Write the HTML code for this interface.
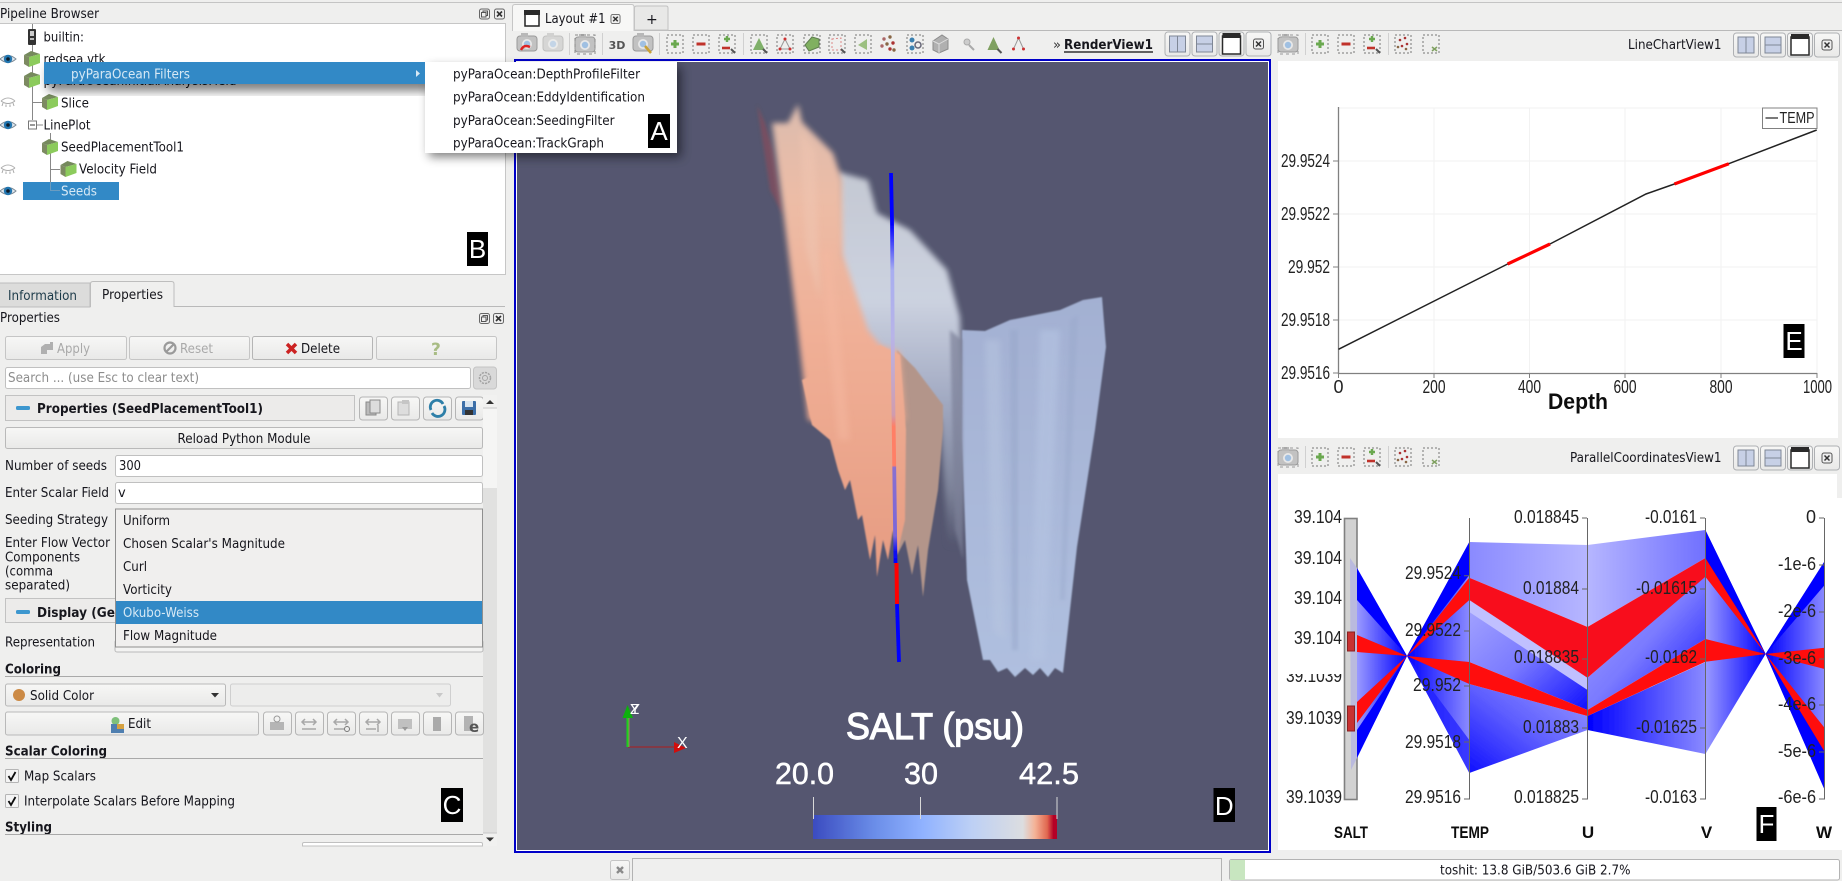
<!DOCTYPE html>
<html><head><meta charset="utf-8"><style>
html,body{margin:0;padding:0;background:#efefee;width:1842px;height:881px;overflow:hidden}
svg{display:block}
text{font-family:"DejaVu Sans","Liberation Sans",sans-serif;font-size:13px;fill:#15151c}
.b{font-weight:bold}
.v{font-family:"Liberation Sans",sans-serif;font-size:18px;fill:#222}
.vb{font-family:"Liberation Sans",sans-serif;font-weight:bold;fill:#111}
.lab{font-family:"Liberation Sans",sans-serif;font-size:32px;fill:#000}
.dis{fill:#a9a9a9}
</style></head><body>
<svg xmlns="http://www.w3.org/2000/svg" width="1842" height="881" viewBox="0 0 1842 881">
<defs>
<filter id="soft" x="-2%" y="-2%" width="104%" height="104%"><feGaussianBlur stdDeviation="0.35"/></filter>
<filter id="b05" x="-20%" y="-20%" width="140%" height="140%"><feGaussianBlur stdDeviation="0.8"/></filter>
<filter id="b1" x="-20%" y="-20%" width="140%" height="140%"><feGaussianBlur stdDeviation="1.6"/></filter>
<filter id="b3" x="-20%" y="-20%" width="140%" height="140%"><feGaussianBlur stdDeviation="3"/></filter>
<filter id="b5" x="-20%" y="-20%" width="140%" height="140%"><feGaussianBlur stdDeviation="5"/></filter>
<linearGradient id="btn" x1="0" y1="0" x2="0" y2="1"><stop offset="0" stop-color="#f7f7f6"/><stop offset="1" stop-color="#e9e9e8"/></linearGradient>
<linearGradient id="cbar"><stop offset="0" stop-color="#3b4cc0"/><stop offset=".25" stop-color="#6a8de8"/><stop offset=".45" stop-color="#90b2ff"/><stop offset=".65" stop-color="#bdd0f5"/><stop offset=".86" stop-color="#dcdde0"/><stop offset=".91" stop-color="#f4b296"/><stop offset=".96" stop-color="#e0674f"/><stop offset=".985" stop-color="#b40426"/><stop offset="1" stop-color="#b40426"/></linearGradient>
<linearGradient id="or" gradientUnits="userSpaceOnUse" x1="0" y1="105" x2="0" y2="570"><stop offset="0" stop-color="#dcbcae"/><stop offset=".2" stop-color="#ecbca6"/><stop offset=".5" stop-color="#f0af96"/><stop offset="1" stop-color="#e69c82"/></linearGradient>
<linearGradient id="gy" gradientUnits="userSpaceOnUse" x1="0" y1="168" x2="0" y2="545"><stop offset="0" stop-color="#c4c8d2"/><stop offset=".35" stop-color="#ccd2e0"/><stop offset=".6" stop-color="#a4acc4"/><stop offset=".85" stop-color="#7d8399"/><stop offset="1" stop-color="#54566f"/></linearGradient>
<linearGradient id="bl" x1="0" y1="0" x2="0" y2="1"><stop offset="0" stop-color="#a3b0d2"/><stop offset="1" stop-color="#afbfdf"/></linearGradient>
<linearGradient id="seg" x1="0" y1="173" x2="0" y2="563" gradientUnits="userSpaceOnUse"><stop offset="0" stop-color="#0000ff"/><stop offset=".13" stop-color="#0000ff"/><stop offset=".25" stop-color="#a8aef0"/><stop offset=".42" stop-color="#b8b4e8"/><stop offset=".62" stop-color="#d09cae"/><stop offset=".65" stop-color="#ff7f66"/><stop offset=".75" stop-color="#ff7f66"/><stop offset=".755" stop-color="#8a70d0"/><stop offset=".93" stop-color="#7a66d8"/><stop offset=".97" stop-color="#1010f0"/><stop offset="1" stop-color="#0000ff"/></linearGradient>
<linearGradient id="g_lr" x1="0" x2="1" y1="0" y2="0"><stop offset="0" stop-color="#8a8aff"/><stop offset="1" stop-color="#b6b6ff"/></linearGradient>
<linearGradient id="g_rl" x1="0" x2="1" y1="0" y2="0"><stop offset="0" stop-color="#b6b6ff"/><stop offset="1" stop-color="#7070ff"/></linearGradient>
<linearGradient id="g_toblue" x1="0" x2="1" y1="0" y2="0"><stop offset="0" stop-color="#9a9aff"/><stop offset="1" stop-color="#0000ff"/></linearGradient>
<linearGradient id="g_fromblue" x1="0" x2="1" y1="0" y2="0"><stop offset="0" stop-color="#0000ff"/><stop offset="1" stop-color="#8a8aff"/></linearGradient>
<linearGradient id="g_mid1" x1="0" x2="1" y1="0" y2="1"><stop offset="0" stop-color="#a5a5ff"/><stop offset=".5" stop-color="#7a7aff"/><stop offset="1" stop-color="#1010ff"/></linearGradient>
<linearGradient id="g_mid2" x1="0" x2="1" y1="1" y2="0"><stop offset="0" stop-color="#1010ff"/><stop offset=".5" stop-color="#6060ff"/><stop offset="1" stop-color="#9a9aff"/></linearGradient>
<symbol id="dock" viewBox="0 0 11 11" overflow="visible"><rect x=".5" y=".5" width="10" height="10" rx="2" fill="#eee" stroke="#666"/><rect x="4" y="2.5" width="4.5" height="4.5" fill="none" stroke="#555"/><rect x="2.5" y="4" width="4.5" height="4.5" fill="#eee" stroke="#555"/></symbol>
<symbol id="xb" viewBox="0 0 11 11" overflow="visible"><rect x=".5" y=".5" width="10" height="10" rx="2" fill="#eee" stroke="#666"/><path d="M3 3L8 8M8 3L3 8" stroke="#333" stroke-width="1.6"/></symbol>
<g id="cube"><path d="M-8 -4L-3 -2L-3 8L-8 5Z" fill="#7d8a62"/><path d="M-8 -4L-1 -8L8 -5L-3 -2Z" fill="#74895c"/><path d="M-3 -2L8 -5L8 4L-3 8Z" fill="#8ccb5c"/></g>
<g id="eye"><path d="M-8 0Q0 -7 8 0Q0 7 -8 0Z" fill="#dfe6ec" stroke="#7b8a96"/><circle r="4.200" fill="#2476b0"/><circle r="1.800" fill="#0a1a2a"/></g>
<g id="eyec"><path d="M-7 -1Q0 -7 7 -1" fill="none" stroke="#b5b5b5"/><path d="M-7 -1Q0 4 7 -1M-5 1L-6 4M-2 2.500L-2 5M2 2.500L2 5M5 1L6 4" fill="none" stroke="#aaa"/></g>
<g id="cam"><rect x="-10" y="-7" width="20" height="15" rx="3" fill="#c2c2c2" stroke="#999"/><rect x="-6" y="-10" width="7" height="4" fill="#b8b8b8"/><circle cy="1" r="5" fill="#e8e8e8"/><circle cy="1" r="3.200" fill="#a0c0e2"/></g>
<g id="dashb"><rect x="-8" y="-9" width="16" height="18" fill="none" stroke="#777" stroke-dasharray="2 2"/></g>
<g id="plus"><use href="#dashb"/><path d="M-4 0H4M0 -4V4" stroke="#6aa84f" stroke-width="3"/></g>
<g id="minus"><use href="#dashb"/><path d="M-4.500 0H4.500" stroke="#c0302c" stroke-width="3"/></g>
<g id="plusminus"><use href="#dashb"/><path d="M-3 -5H3M0 -8V-2" stroke="#6aa84f" stroke-width="2.400"/><path d="M-5 4H3" stroke="#c0302c" stroke-width="2.600"/><path d="M4 5L8 9" stroke="#555" stroke-width="2"/></g>
<g id="mark"><use href="#dashb"/><circle cx="-3" cy="-4" r="1.300" fill="#a33"/><circle cx="2" cy="-6" r="1.300" fill="#a33"/><circle cx="4" cy="0" r="1.300" fill="#a33"/><circle cx="-1" cy="2" r="1.300" fill="#a33"/><circle cx="-5" cy="3" r="1.300" fill="#864"/><circle cx="3" cy="5" r="1.300" fill="#864"/></g>
<g id="vsplit"><rect x="-12.500" y="-12" width="25" height="24" rx="3" fill="url(#btn)" stroke="#aeb0b3"/><rect x="-8" y="-8" width="16" height="16" fill="#c7d0e6" stroke="#7f8796"/><path d="M0 -8V8" stroke="#7f8796"/></g>
<g id="hsplit"><rect x="-12.500" y="-12" width="25" height="24" rx="3" fill="url(#btn)" stroke="#aeb0b3"/><rect x="-8" y="-8" width="16" height="16" fill="#c7d0e6" stroke="#7f8796"/><path d="M-8 0H8" stroke="#7f8796"/></g>
<g id="maxi"><rect x="-12.500" y="-12" width="25" height="24" rx="3" fill="url(#btn)" stroke="#aeb0b3"/><rect x="-9" y="-8" width="18" height="18" fill="#fff" stroke="#2c2c2c" stroke-width="1.500"/><rect x="-9" y="-11" width="18" height="5" fill="#2c2c2c"/></g>
<g id="closeb"><rect x="-12.500" y="-12" width="25" height="24" rx="3" fill="url(#btn)" stroke="#aeb0b3"/><rect x="-5" y="-5" width="10" height="10" rx="2" fill="#eee" stroke="#555"/><path d="M-2.500 -2.500L2.500 2.500M2.500 -2.500L-2.500 2.500" stroke="#333" stroke-width="1.500"/></g>
<g id="sb"><rect x="0" y="0" width="28" height="23" rx="3" fill="url(#btn)" stroke="#b5b5b5"/></g>
</defs>

<rect width="1842" height="881" fill="#efefee"/>
<g filter="url(#soft)">
<rect x="0" y="2" width="1842" height="1" fill="#c4c4c4"/>

<!-- ===== pipeline browser ===== -->
<text x="0" y="18" textLength="99" lengthAdjust="spacingAndGlyphs">Pipeline Browser</text>
<use href="#dock" x="479" y="8.500" width="11" height="11"/>
<use href="#xb" x="494" y="8.500" width="11" height="11"/>
<rect x="-1" y="23.500" width="506.500" height="251" fill="#fff" stroke="#c6c6c6"/>
<path d="M32.500 24V120M32.500 102.500H43M37 125H43M50.500 133V190.500M50.500 169.500H60M50.500 190.500H60" stroke="#888" fill="none"/>
<rect x="28" y="29" width="8" height="16" rx="1" fill="#333"/><rect x="30" y="31" width="4" height="5" fill="#ccc"/><rect x="30" y="38" width="4" height="2" fill="#bbb"/>
<text x="43.500" y="41.500" textLength="40.500" lengthAdjust="spacingAndGlyphs">builtin:</text>
<use href="#eye" x="8" y="59"/><use href="#cube" x="32" y="59"/>
<text x="43.500" y="63.500" textLength="62" lengthAdjust="spacingAndGlyphs">redsea.vtk</text>
<use href="#cube" x="32" y="80"/>
<text x="43.500" y="85" textLength="193" lengthAdjust="spacingAndGlyphs">pyParaOceanInitialAnalysisField</text>
<use href="#eyec" x="8" y="102"/><use href="#cube" x="50" y="102"/>
<text x="61" y="107.500" textLength="28" lengthAdjust="spacingAndGlyphs">Slice</text>
<use href="#eye" x="8" y="125"/>
<rect x="28.500" y="121" width="8" height="8" fill="#fff" stroke="#777"/><path d="M30 125H35" stroke="#333"/>
<text x="43.500" y="129.500" textLength="47" lengthAdjust="spacingAndGlyphs">LinePlot</text>
<use href="#cube" x="50" y="147"/>
<text x="61" y="151.500" textLength="123" lengthAdjust="spacingAndGlyphs">SeedPlacementTool1</text>
<use href="#eyec" x="8" y="169"/><use href="#cube" x="68.500" y="169"/>
<text x="79" y="173.500" textLength="78" lengthAdjust="spacingAndGlyphs">Velocity Field</text>
<use href="#eye" x="8" y="191"/>
<rect x="23" y="182" width="96" height="18" fill="#3289c6"/>
<path d="M50.500 182V190.500H60" stroke="#6a9cc0" fill="none"/>
<text x="61" y="195.500" textLength="36" lengthAdjust="spacingAndGlyphs" style="fill:#d7e9f5">Seeds</text>

<!-- tabs left -->
<rect x="-1" y="283" width="91" height="24" fill="#dcdcdb" stroke="#bdbdbd"/>
<text x="8" y="300" textLength="69" lengthAdjust="spacingAndGlyphs" style="fill:#1e3a4a">Information</text>
<path d="M90.500 307V284Q90.500 281.500 93 281.500H171.500Q174 281.500 174 284V307" fill="#efefee" stroke="#bdbdbd"/>
<path d="M174 306.500H505" stroke="#b9b9b9"/>
<text x="102" y="299" textLength="61" lengthAdjust="spacingAndGlyphs">Properties</text>
<text x="0" y="322" textLength="60" lengthAdjust="spacingAndGlyphs">Properties</text>
<use href="#dock" x="479" y="313" width="11" height="11"/>
<use href="#xb" x="493" y="313" width="11" height="11"/>

<!-- action buttons -->
<rect x="5.500" y="336.500" width="121" height="23" rx="2" fill="url(#btn)" stroke="#c5c5c5"/>
<path d="M41 354V347L45 344H50V342H53V350H47V354Z" fill="#b0b0b0"/>
<text x="57" y="353" textLength="33" lengthAdjust="spacingAndGlyphs" class="dis">Apply</text>
<rect x="129.500" y="336.500" width="120" height="23" rx="2" fill="url(#btn)" stroke="#c5c5c5"/>
<circle cx="170" cy="348" r="5.500" fill="none" stroke="#9a9a9a" stroke-width="2.200"/><path d="M166 352L174 344" stroke="#9a9a9a" stroke-width="2.200"/>
<text x="180" y="353" textLength="33" lengthAdjust="spacingAndGlyphs" class="dis">Reset</text>
<rect x="252.500" y="336.500" width="120" height="23" rx="2" fill="url(#btn)" stroke="#b5b5b5"/>
<path d="M287 344L296 353M296 344L287 353" stroke="#cc2222" stroke-width="3.500"/>
<text x="301" y="353" textLength="39" lengthAdjust="spacingAndGlyphs">Delete</text>
<rect x="376.500" y="336.500" width="120" height="23" rx="2" fill="url(#btn)" stroke="#c5c5c5"/>
<text x="431" y="355" style="font-size:17px;font-weight:bold;fill:#a8bc84">?</text>

<rect x="5.500" y="367.500" width="465" height="21" rx="2" fill="#fff" stroke="#c0c0c0"/>
<text x="8" y="382" textLength="191" lengthAdjust="spacingAndGlyphs" style="fill:#8d8d8d">Search ... (use Esc to clear text)</text>
<rect x="473.500" y="367" width="23" height="22" rx="3" fill="#d9d9d9" stroke="#c4c4c4"/>
<circle cx="485" cy="378" r="5.500" fill="none" stroke="#a4a4a4" stroke-width="1.500" stroke-dasharray="2.200 1"/><circle cx="485" cy="378" r="2.500" fill="none" stroke="#a4a4a4"/>

<!-- properties header -->
<rect x="5.500" y="395.500" width="349" height="25" fill="#ecebea" stroke="#c2c2c2"/>
<rect x="16" y="406" width="14" height="4" rx="1.500" fill="#3d97cf"/>
<text x="37" y="413" class="b" textLength="226" lengthAdjust="spacingAndGlyphs">Properties (SeedPlacementTool1)</text>
<use href="#sb" x="359.500" y="397"/><rect x="366" y="402" width="10" height="13" fill="#bbb" stroke="#8a8a8a"/><rect x="370" y="400" width="10" height="13" fill="#ddd" stroke="#8a8a8a"/>
<use href="#sb" x="391.500" y="397"/><rect x="398" y="402" width="11" height="13" fill="#ddd" stroke="#b5b5b5"/><rect x="402" y="400" width="7" height="4" fill="#c5c5c5"/>
<use href="#sb" x="423.500" y="397"/><path d="M431 410A6.500 6.500 0 0 1 443 404" fill="none" stroke="#2d7fa8" stroke-width="2.800"/><path d="M444 406A6.500 6.500 0 0 1 432 413" fill="none" stroke="#2d7fa8" stroke-width="2.800"/>
<use href="#sb" x="455.500" y="397"/><rect x="462" y="401" width="14" height="14" rx="1" fill="#3a6ea8"/><rect x="465" y="401" width="8" height="6" fill="#d8e4ef"/><rect x="465" y="410" width="8" height="5" fill="#333"/>
<!-- scrollbar -->
<rect x="483" y="395" width="14" height="451" fill="#f1f1f0"/>
<rect x="483" y="488" width="14" height="345" fill="#e1e1e0"/>
<rect x="483" y="408" width="14" height="80" fill="#f5f5f4"/>
<path d="M486 404L490 400L494 404Z" fill="#333"/><path d="M486 837.500L490 841.500L494 837.500Z" fill="#333"/>
<path d="M483 408H497M483 833H497" stroke="#c8c8c8"/>

<rect x="5.500" y="427.500" width="477" height="21" rx="2" fill="url(#btn)" stroke="#b9b9b9"/>
<text x="177.500" y="443" textLength="133" lengthAdjust="spacingAndGlyphs">Reload Python Module</text>
<text x="5" y="470" textLength="102" lengthAdjust="spacingAndGlyphs">Number of seeds</text>
<rect x="115.500" y="455.500" width="367" height="21" rx="2" fill="#fff" stroke="#c0c0c0"/>
<text x="119" y="470" textLength="22" lengthAdjust="spacingAndGlyphs">300</text>
<text x="5" y="497" textLength="104" lengthAdjust="spacingAndGlyphs">Enter Scalar Field</text>
<rect x="115.500" y="482.500" width="367" height="21" rx="2" fill="#fff" stroke="#c0c0c0"/>
<text x="118" y="497">v</text>
<text x="5" y="524" textLength="103" lengthAdjust="spacingAndGlyphs">Seeding Strategy</text>
<text x="5" y="547" textLength="105" lengthAdjust="spacingAndGlyphs">Enter Flow Vector</text>
<text x="5" y="561.500" textLength="75" lengthAdjust="spacingAndGlyphs">Components</text>
<text x="5" y="575.500" textLength="48" lengthAdjust="spacingAndGlyphs">(comma</text>
<text x="5" y="589.500" textLength="65" lengthAdjust="spacingAndGlyphs">separated)</text>
<rect x="5.500" y="598.500" width="115" height="24" fill="#ecebea" stroke="#c2c2c2"/>
<rect x="16" y="610" width="14" height="4" rx="1.500" fill="#3d97cf"/>
<text x="37" y="617" class="b" textLength="78" lengthAdjust="spacingAndGlyphs">Display (Ge</text>
<text x="5" y="646.500" textLength="90" lengthAdjust="spacingAndGlyphs">Representation</text>

<rect x="115" y="640" width="368" height="12" rx="2" fill="#f3f3f2" stroke="#b9b9b9"/>
<!-- dropdown -->
<rect x="115.500" y="509" width="367" height="138" fill="#f0efee" stroke="#8f8f8f"/>
<text x="123" y="525" textLength="47" lengthAdjust="spacingAndGlyphs">Uniform</text>
<text x="123" y="548" textLength="162" lengthAdjust="spacingAndGlyphs">Chosen Scalar's Magnitude</text>
<text x="123" y="571" textLength="24" lengthAdjust="spacingAndGlyphs">Curl</text>
<text x="123" y="594" textLength="49" lengthAdjust="spacingAndGlyphs">Vorticity</text>
<rect x="116" y="601" width="366" height="23" fill="#3289c6"/>
<text x="123" y="617" textLength="76" lengthAdjust="spacingAndGlyphs" style="fill:#d7e9f5">Okubo-Weiss</text>
<text x="123" y="640" textLength="94" lengthAdjust="spacingAndGlyphs">Flow Magnitude</text>

<text x="5" y="673.500" class="b" textLength="56" lengthAdjust="spacingAndGlyphs">Coloring</text>
<path d="M5 676.500H483" stroke="#a9a9a9"/>
<rect x="5.500" y="684" width="220" height="22" rx="2" fill="url(#btn)" stroke="#b9b9b9"/>
<circle cx="19" cy="695" r="6" fill="#cc8a45"/>
<text x="30" y="700" textLength="64" lengthAdjust="spacingAndGlyphs">Solid Color</text>
<path d="M211 693H219L215 697.500Z" fill="#333"/>
<rect x="230.500" y="684" width="220" height="22" rx="2" fill="#ededec" stroke="#cfcfcf"/>
<path d="M436 693H443L439.500 697.500Z" fill="#c8c8c8"/>
<rect x="5.500" y="712" width="253" height="23" rx="2" fill="url(#btn)" stroke="#b9b9b9"/>
<circle cx="115.500" cy="721" r="4" fill="#7ec07a"/><rect x="111" y="724" width="13" height="9" fill="#4f7fb0"/><rect x="117" y="724" width="7" height="5" fill="#d6a13f"/>
<text x="128" y="728" textLength="23" lengthAdjust="spacingAndGlyphs">Edit</text>
<g>
<use href="#sb" x="263.500" y="712"/><use href="#sb" x="295.500" y="712"/><use href="#sb" x="327.500" y="712"/><use href="#sb" x="359.500" y="712"/><use href="#sb" x="391.500" y="712"/><use href="#sb" x="423.500" y="712"/><use href="#sb" x="455.500" y="712"/>
<rect x="270" y="722" width="14" height="8" fill="#b5b5b5"/><circle cx="277" cy="719" r="3" fill="none" stroke="#999"/>
<path d="M302 722H316M302 729H316M305 719L302 722L305 725M313 719L316 722L313 725" fill="none" stroke="#a8a8a8" stroke-width="1.500"/>
<path d="M334 722H348M334 729H344M337 719L334 722L337 725M345 719L348 722L345 725" fill="none" stroke="#a8a8a8" stroke-width="1.500"/><circle cx="347" cy="729" r="2.500" fill="none" stroke="#777"/>
<path d="M366 722H380M366 729H376M369 719L366 722L369 725M377 719L380 722L377 725M378 725V732" fill="none" stroke="#a8a8a8" stroke-width="1.500"/>
<rect x="398" y="719" width="14" height="10" fill="#c0c0c0"/><path d="M402 727L405 731L408 727Z" fill="#999"/>
<rect x="433" y="717" width="8" height="14" fill="#aaa"/>
<rect x="464" y="716" width="9" height="15" fill="#b3b3b3"/><text x="469" y="732" style="font-size:15px;font-weight:bold;fill:#555">e</text>
</g>
<text x="5" y="755.500" class="b" textLength="102" lengthAdjust="spacingAndGlyphs">Scalar Coloring</text>
<path d="M5 758.500H483" stroke="#a9a9a9"/>
<rect x="5.500" y="769.500" width="13" height="13" rx="1" fill="#f4f4f4" stroke="#b5b5b5"/>
<path d="M8.500 776L11 780L15.500 772" fill="none" stroke="#111" stroke-width="1.800"/>
<text x="24" y="780.500" textLength="72" lengthAdjust="spacingAndGlyphs">Map Scalars</text>
<rect x="5.500" y="794.500" width="13" height="13" rx="1" fill="#f4f4f4" stroke="#b5b5b5"/>
<path d="M8.500 801L11 805L15.500 797" fill="none" stroke="#111" stroke-width="1.800"/>
<text x="24" y="805.500" textLength="211" lengthAdjust="spacingAndGlyphs">Interpolate Scalars Before Mapping</text>
<text x="5" y="831.500" class="b" textLength="47" lengthAdjust="spacingAndGlyphs">Styling</text>
<path d="M5 834.500H483" stroke="#a9a9a9"/>
<path d="M302.500 846V844Q302.500 842.500 304 842.500H481Q482.500 842.500 482.500 844V846Z" fill="#fff" stroke="#c0c0c0"/>

<!-- ===== layout tabs ===== -->
<path d="M512 30.500H1842" stroke="#b9b9b9"/>
<path d="M634.500 30V8Q634.500 6 636.500 6H666Q668 6 668 8V30Z" fill="#e8e8e7" stroke="#c2c2c2"/>
<text x="646" y="24" style="font-size:14px">+</text>
<path d="M512.500 31V7Q512.500 4.500 515 4.500H631.500Q634 4.500 634 7V31" fill="#f7f7f6" stroke="#c6c6c6"/>
<rect x="525" y="13" width="14" height="13" fill="#fff" stroke="#222" stroke-width="1.500"/><rect x="524" y="10" width="16" height="5" fill="#2a2a2a"/>
<text x="545" y="23" textLength="60.500" lengthAdjust="spacingAndGlyphs">Layout #1</text>
<use href="#xb" x="610.500" y="14" width="10" height="10"/>

<!-- render view toolbar -->
<use href="#cam" x="527" y="43"/><path d="M521 50Q524 44 530 47" fill="none" stroke="#d22" stroke-width="2.500"/>
<g opacity=".55"><use href="#cam" x="553" y="43"/></g>
<path d="M569.500 33V55M602.500 33V55M659.500 33V55M743.500 33V55" stroke="#d0d0d0"/>
<use href="#cam" x="585" y="44"/><rect x="575" y="35" width="20" height="19" fill="none" stroke="#888" stroke-dasharray="3 3"/>
<text x="617" y="49" text-anchor="middle" style="font-size:11px;font-weight:bold;fill:#555">3D</text>
<use href="#cam" x="643" y="43"/><path d="M645 46L651 53" stroke="#c8a036" stroke-width="2.500"/>
<use href="#plus" x="675" y="44"/><use href="#minus" x="701" y="44"/><use href="#plusminus" x="727" y="44"/>
<g transform="translate(759,44)"><use href="#dashb"/><path d="M-6 6L0 -6L6 6Z" fill="#7fb069"/><path d="M4 5L8 9" stroke="#555" stroke-width="2"/></g>
<g transform="translate(785,44)"><use href="#dashb"/><path d="M-5 5L0 -5L5 5Z" fill="none" stroke="#999"/><circle cx="-5" cy="5" r="1.500" fill="#c33"/><circle cy="-5" r="1.500" fill="#c33"/><circle cx="5" cy="5" r="1.500" fill="#c33"/></g>
<g transform="translate(812,44)"><use href="#dashb"/><path d="M-7 1L0 -7L7 -5L7 3L-3 7Z" fill="#80b060" stroke="#5f7f50"/></g>
<g transform="translate(837,44)"><use href="#dashb"/><path d="M-5 -5L4 -6L4 6L-5 6Z" fill="none" stroke="#d88" stroke-dasharray="2 2"/><path d="M4 5L8 9" stroke="#555" stroke-width="2"/></g>
<g transform="translate(863,44)"><use href="#dashb"/><path d="M-5 1L4 -5L4 6Z" fill="#9cc080"/></g>
<g transform="translate(888,44)"><circle cx="-4" cy="-5" r="1.700" fill="#a66"/><circle cx="2" cy="-7" r="1.700" fill="#864"/><circle cx="5" cy="-1" r="1.700" fill="#a33"/><circle cx="-1" cy="0" r="1.700" fill="#864"/><circle cx="-6" cy="2" r="1.700" fill="#a66"/><circle cx="2" cy="5" r="1.700" fill="#a33"/><circle cx="6" cy="6" r="1.700" fill="#864"/></g>
<g transform="translate(915,44)"><use href="#dashb"/><circle cx="-3" cy="-4" r="2.500" fill="#3a80b0"/><circle cx="-3" cy="4" r="2.500" fill="#3a80b0"/><circle cx="3" cy="1" r="3" fill="none" stroke="#667" stroke-width="1.500"/></g>
<g transform="translate(940,44)"><path d="M-7 -3L2 -9L8 -5L8 5L-1 9L-7 6Z" fill="#b0b0b0" stroke="#8c8c8c"/><path d="M-1 9V0L8 -5M-1 0L-7 -3" stroke="#ddd" fill="none"/></g>
<g transform="translate(969,44)"><circle cx="-2" cy="-2" r="3" fill="#ccc" stroke="#aaa"/><path d="M0 1L5 6" stroke="#aaa" stroke-width="2"/></g>
<g transform="translate(993.500,44)"><path d="M-6 6L0 -7L6 6Z" fill="#7fa060"/><path d="M4 5L8 9" stroke="#555" stroke-width="2"/></g>
<g transform="translate(1018.500,44)"><path d="M-5 5L0 -6L5 5" fill="none" stroke="#999"/><circle cx="-5" cy="5" r="1.500" fill="#c33"/><circle cy="-6" r="1.500" fill="#c33"/><circle cx="5" cy="5" r="1.500" fill="#c33"/></g>
<text x="1053" y="49" style="font-size:13px;fill:#333">»</text>
<text x="1064" y="49" class="b" textLength="89" lengthAdjust="spacingAndGlyphs">RenderView1</text>
<path d="M1064 52H1153" stroke="#111" stroke-width="1.300"/>
<use href="#vsplit" x="1177.500" y="44"/><use href="#hsplit" x="1204.500" y="44"/><use href="#maxi" x="1231.500" y="44"/><use href="#closeb" x="1258.500" y="44"/>

<!-- ===== render view ===== -->
<rect x="514" y="59" width="757" height="794" fill="#0000c8"/>
<rect x="516" y="61" width="753" height="790" fill="#fff"/>
<rect x="517" y="62" width="751" height="788" fill="#54566f"/>
<!-- volume -->
<g>
<path d="M757 105L765 123L773 150L783 215L770 190Z" fill="#9a4a55" opacity=".5" filter="url(#b1)"/>
<!-- gray -->
<path d="M838 172L868 180L877 213L910 230L947 270L960 317L965 440L964 545L948 545L940 420L900 400L850 330L835 240Z" fill="url(#gy)" filter="url(#b3)"/>
<!-- dark orange -->
<path d="M897 350L915 368L943 405L943 430L938 490L933 520L928 550L923 597L918 545L912 575L905 540L897 555L890 440Z" fill="#b3958a" filter="url(#b05)"/>
<!-- orange upper (soft) -->
<path d="M772 123L788 123L798 104L802 122L833 153L842 180L843 255L868 330L880 345L900 352L905 420L860 430L808 420L797 323L783 210Z" fill="url(#or)" filter="url(#b3)"/>
<!-- orange lower (fringed) -->
<path d="M802 380L880 345L900 355L906 430L905 520L897 555L893 530L888 560L883 540L877 577L875 535L870 560L862 515L858 520L850 480L845 490L838 470L830 440L812 425Z" fill="url(#or)" filter="url(#b05)"/>
<path d="M820 250L832 250L850 440L838 440Z" fill="#f4b8a0" opacity=".5" filter="url(#b3)"/>
<path d="M800 130L815 150L820 300L806 250Z" fill="#efc4b0" opacity=".6" filter="url(#b3)"/>
<!-- blue -->
<path d="M962 330L985 331L1010 320L1060 310L1083 300L1102 297L1106 347L1095 430L1077 547L1063 673L1055 668L1048 677L1040 668L1033 675L1025 668L1015 677L1007 668L998 672L990 660L983 660L967 580L962 440Z" fill="url(#bl)" filter="url(#b05)"/>
<path d="M950 330L962 340L963 560L955 530Z" fill="#7b8098" opacity=".7" filter="url(#b1)"/>
<path d="M985 340L1000 340L1005 640L993 630Z" fill="#b8c6e0" opacity=".5" filter="url(#b3)"/>
<path d="M1040 330L1060 330L1045 660L1030 660Z" fill="#b5c4e2" opacity=".6" filter="url(#b3)"/>
<path d="M1010 330L1018 330L1018 650L1012 650Z" fill="#95a5c8" opacity=".45" filter="url(#b1)"/>
<path d="M1070 320L1078 315L1065 600L1060 600Z" fill="#95a5c8" opacity=".35" filter="url(#b1)"/>
</g>
<path d="M891 173L892 220L892.500 300L893 380L894 450L895.500 563" stroke="url(#seg)" stroke-width="3.800" fill="none"/>
<path d="M896.500 563L897 604" stroke="#ff0000" stroke-width="4"/>
<path d="M897 604L899 662" stroke="#0000ff" stroke-width="3.800"/>
<!-- axes -->
<path d="M628 747H676" stroke="#b01a1a"/>
<path d="M674 742L686 748L674 753Z" fill="#d01010"/>
<path d="M627.500 747V712" stroke="#1fd21f" stroke-width="2"/><path d="M629 747V712" stroke="#9a8a5a"/>
<path d="M622.500 718L627.500 705L633 718Z" fill="#10b010"/>
<text x="630" y="714" style="font-family:'Liberation Sans',sans-serif;font-size:15px;fill:#fff">Y</text>
<text x="630" y="714" style="font-family:'Liberation Sans',sans-serif;font-size:15px;fill:#fff">Z</text>
<text x="677" y="748" style="font-family:'Liberation Sans',sans-serif;font-size:16px;fill:#fff">X</text>
<!-- colourbar -->
<rect x="813" y="815" width="244" height="24" fill="url(#cbar)"/>
<path d="M813.500 797V819M920.500 797V819M1057 797V819" stroke="#d8d8d8" stroke-width="1"/>
<text x="846" y="739" textLength="178" lengthAdjust="spacingAndGlyphs" style="font-family:'Liberation Sans',sans-serif;font-size:37px;fill:#fff;stroke:#fff;stroke-width:1.200">SALT (psu)</text>
<text x="775" y="784" textLength="59" lengthAdjust="spacingAndGlyphs" style="font-family:'Liberation Sans',sans-serif;font-size:31px;fill:#fff;stroke:#fff;stroke-width:.5">20.0</text>
<text x="904" y="784" textLength="34" lengthAdjust="spacingAndGlyphs" style="font-family:'Liberation Sans',sans-serif;font-size:31px;fill:#fff;stroke:#fff;stroke-width:.5">30</text>
<text x="1019" y="784" textLength="60" lengthAdjust="spacingAndGlyphs" style="font-family:'Liberation Sans',sans-serif;font-size:31px;fill:#fff;stroke:#fff;stroke-width:.5">42.5</text>
<rect x="1213.500" y="788" width="21.500" height="34" fill="#000"/><text x="1224.250" y="815" text-anchor="middle" class="lab" style="fill:#fff;font-size:26px">D</text>

<!-- ===== line chart ===== -->
<use href="#cam" x="1288" y="44"/>
<rect x="1278" y="35" width="20" height="19" fill="none" stroke="#999" stroke-dasharray="3 3"/>
<path d="M1305.500 33V55M1388.500 33V55" stroke="#d0d0d0"/>
<use href="#plus" x="1320" y="44"/><use href="#minus" x="1346" y="44"/><use href="#plusminus" x="1372" y="44"/><use href="#mark" x="1403" y="44"/>
<g transform="translate(1431,44)"><use href="#dashb"/><path d="M1 3L6 7M6 3L1 7" stroke="#7fa060" stroke-width="1.500"/></g>
<text x="1628" y="49" textLength="93.500" lengthAdjust="spacingAndGlyphs">LineChartView1</text>
<use href="#vsplit" x="1746" y="45"/><use href="#hsplit" x="1773" y="45"/><use href="#maxi" x="1800" y="45"/><use href="#closeb" x="1827" y="45"/>
<rect x="1278" y="61" width="560" height="377" fill="#fff"/>
<path d="M1434 108V373M1529.500 108V373M1625 108V373M1721 108V373M1817 108V373M1338 108H1817M1338 161H1817M1338 214H1817M1338 267H1817M1338 320H1817" stroke="#f2f2f2"/>
<path d="M1338.500 107V373.500H1817" fill="none" stroke="#808080" stroke-width="1.300"/>
<path d="M1333 161H1338M1333 214H1338M1333 267H1338M1333 320H1338M1333 373H1338M1338.500 373V378M1434 373V378M1529.500 373V378M1625 373V378M1721 373V378M1817 373V378" stroke="#808080"/>
<g>
<text class="v" x="1281" y="167" textLength="49" lengthAdjust="spacingAndGlyphs">29.9524</text>
<text class="v" x="1281" y="220" textLength="49" lengthAdjust="spacingAndGlyphs">29.9522</text>
<text class="v" x="1288" y="273" textLength="42" lengthAdjust="spacingAndGlyphs">29.952</text>
<text class="v" x="1281" y="326" textLength="49" lengthAdjust="spacingAndGlyphs">29.9518</text>
<text class="v" x="1281" y="379" textLength="49" lengthAdjust="spacingAndGlyphs">29.9516</text>
<text class="v" x="1338.500" y="393" text-anchor="middle">0</text>
<text class="v" x="1422.500" y="393" textLength="23" lengthAdjust="spacingAndGlyphs">200</text>
<text class="v" x="1518" y="393" textLength="23" lengthAdjust="spacingAndGlyphs">400</text>
<text class="v" x="1613.500" y="393" textLength="23" lengthAdjust="spacingAndGlyphs">600</text>
<text class="v" x="1709.500" y="393" textLength="23" lengthAdjust="spacingAndGlyphs">800</text>
<text class="v" x="1803" y="393" textLength="29" lengthAdjust="spacingAndGlyphs">1000</text>
</g>
<text class="vb" x="1548" y="409" textLength="60" lengthAdjust="spacingAndGlyphs" style="font-size:22px">Depth</text>
<path d="M1338.500 349.300L1507.600 264L1550 244L1646 194L1674.400 184L1728.800 163.700L1816.700 130" fill="none" stroke="#222" stroke-width="1.500"/>
<path d="M1507.600 264L1550 244M1674.400 184L1728.800 163.700" stroke="#ff0505" stroke-width="3.200"/>
<rect x="1762.500" y="108" width="54.500" height="20.500" fill="#fff" stroke="#808080"/>
<path d="M1765.500 118H1778" stroke="#333" stroke-width="1.300"/>
<text class="v" x="1779.500" y="123" textLength="35" lengthAdjust="spacingAndGlyphs" style="font-size:16px">TEMP</text>
<rect x="1783.500" y="324" width="21" height="34" fill="#000"/><text x="1794" y="350" text-anchor="middle" class="lab" style="fill:#fff;font-size:26px">E</text>

<!-- ===== parallel coords ===== -->
<use href="#cam" x="1288" y="457"/><rect x="1278" y="448" width="20" height="19" fill="none" stroke="#999" stroke-dasharray="3 3"/>
<path d="M1305.500 446V468M1388.500 446V468" stroke="#d0d0d0"/>
<use href="#plus" x="1320" y="457"/><use href="#minus" x="1346" y="457"/><use href="#plusminus" x="1372" y="457"/><use href="#mark" x="1403" y="457"/>
<g transform="translate(1431,457)"><use href="#dashb"/><path d="M1 3L6 7M6 3L1 7" stroke="#7fa060" stroke-width="1.500"/></g>
<text x="1570" y="462" textLength="151.500" lengthAdjust="spacingAndGlyphs">ParallelCoordinatesView1</text>
<use href="#vsplit" x="1746" y="458"/><use href="#hsplit" x="1773" y="458"/><use href="#maxi" x="1800" y="458"/><use href="#closeb" x="1827" y="458"/>
<rect x="1278" y="474" width="559" height="376" fill="#fff"/>
<rect x="1837" y="498" width="5" height="352" fill="#fff"/>

<!-- SALT bar -->
<rect x="1344.500" y="518.500" width="12.500" height="281" fill="#d2d2d2" stroke="#808080" stroke-width="1.600"/>
<path d="M1350 558L1357 568V758L1351 770Z" fill="#babade"/>
<path d="M1357 568L1407 656L1357 758Z" fill="url(#g_toblue)"/>
<path d="M1357 568L1407 656L1357 600Z" fill="#0000ff"/>
<path d="M1357 730L1407 656L1357 758Z" fill="#0000ff"/>
<path d="M1357 635L1407 656L1357 652ZM1357 702L1407 656L1357 723Z" fill="#ff0808"/>
<rect x="1347.500" y="632" width="7" height="19" fill="#c83030" stroke="#8a2020"/>
<rect x="1347.500" y="706" width="7" height="25" fill="#c83030" stroke="#8a2020"/>
<!-- pivot to TEMP -->
<path d="M1407 656L1469.300 542V773Z" fill="url(#g_fromblue)"/>
<path d="M1407 656L1469.300 542V575Z" fill="#0000ff"/>
<path d="M1407 656L1469.300 740V773Z" fill="#2020ff" opacity=".75"/>
<path d="M1407 656L1469.300 577.700V600ZM1407 656L1469.300 662V684Z" fill="#ff0808"/>
<!-- TEMP to U -->
<path d="M1469.300 542L1587.500 545V627L1469.300 577.700Z" fill="url(#g_lr)"/>
<path d="M1469.300 600L1587.500 677.700V710L1469.300 662Z" fill="url(#g_mid1)"/>
<path d="M1469.300 612L1587.500 690V677.700L1469.300 600Z" fill="#c0c0ff"/>
<path d="M1469.300 684L1587.500 716V730L1469.300 773Z" fill="url(#g_mid2)"/>
<path d="M1469.300 577.700L1587.500 627V677.700L1469.300 600Z" fill="#f8101a"/>
<path d="M1469.300 662L1587.500 710V716L1469.300 684Z" fill="#ff0808"/>
<!-- U to V -->
<path d="M1587.500 545L1705.400 530V558L1587.500 627Z" fill="url(#g_rl)"/>
<path d="M1587.500 677.700L1705.400 576V639L1587.500 710Z" fill="url(#g_mid1)"/>
<path d="M1587.500 716L1705.400 662V754L1587.500 730Z" fill="url(#g_fromblue)"/>
<path d="M1587.500 627L1705.400 558V576.700L1587.500 677.700Z" fill="#f8101a"/>
<path d="M1587.500 710L1705.400 639V661.700L1587.500 716Z" fill="#ff0808"/>
<!-- V to W -->
<path d="M1705.400 530L1765.600 654L1705.400 754Z" fill="url(#g_toblue)"/>
<path d="M1705.400 530L1765.600 654L1705.400 560Z" fill="#0000ff"/>
<path d="M1705.400 558L1765.600 654L1705.400 576.700ZM1705.400 639L1765.600 654L1705.400 661.700Z" fill="#ff0808"/>
<path d="M1765.600 654L1824.700 561V790Z" fill="url(#g_fromblue)"/>
<path d="M1765.600 654L1824.700 561V585Z" fill="#0000ff"/>
<path d="M1765.600 654L1824.700 750V790Z" fill="#0000ff"/>
<path d="M1765.600 654L1824.700 647.700V669ZM1765.600 654L1824.700 728V752Z" fill="#ff0808"/>
<!-- axes -->
<path d="M1469.500 518V799H1464M1587.500 518V799H1582M1705.500 518V799H1700M1824.500 518V799H1819M1582 518H1587M1700 518H1705M1819 518H1824M1464 575.700H1469M1464 631H1469M1464 686H1469M1464 742H1469M1582 589H1587M1582 659H1587M1582 728H1587M1700 589H1705M1700 659H1705M1700 728H1705M1819 565H1824M1819 612H1824M1819 659H1824M1819 705H1824M1819 752H1824" stroke="#666" fill="none"/>
<g>
<text class="v" x="1294" y="523" textLength="48" lengthAdjust="spacingAndGlyphs">39.104</text>
<text class="v" x="1294" y="564" textLength="48" lengthAdjust="spacingAndGlyphs">39.104</text>
<text class="v" x="1294" y="604" textLength="48" lengthAdjust="spacingAndGlyphs">39.104</text>
<text class="v" x="1294" y="644" textLength="48" lengthAdjust="spacingAndGlyphs">39.104</text>
<text class="v" x="1286" y="682" textLength="56" lengthAdjust="spacingAndGlyphs">39.1039</text>
<rect x="1282" y="663" width="60" height="11" fill="#fff"/>
<text class="v" x="1286" y="724" textLength="56" lengthAdjust="spacingAndGlyphs">39.1039</text>
<text class="v" x="1286" y="803" textLength="56" lengthAdjust="spacingAndGlyphs">39.1039</text>
<text class="v" x="1405" y="579" textLength="56" lengthAdjust="spacingAndGlyphs">29.9524</text>
<text class="v" x="1405" y="636" textLength="56" lengthAdjust="spacingAndGlyphs">29.9522</text>
<text class="v" x="1413" y="691" textLength="48" lengthAdjust="spacingAndGlyphs">29.952</text>
<text class="v" x="1405" y="748" textLength="56" lengthAdjust="spacingAndGlyphs">29.9518</text>
<text class="v" x="1405" y="803" textLength="56" lengthAdjust="spacingAndGlyphs">29.9516</text>
<text class="v" x="1514" y="523" textLength="65" lengthAdjust="spacingAndGlyphs">0.018845</text>
<text class="v" x="1523" y="594" textLength="56" lengthAdjust="spacingAndGlyphs">0.01884</text>
<text class="v" x="1514" y="663" textLength="65" lengthAdjust="spacingAndGlyphs">0.018835</text>
<text class="v" x="1523" y="733" textLength="56" lengthAdjust="spacingAndGlyphs">0.01883</text>
<text class="v" x="1514" y="803" textLength="65" lengthAdjust="spacingAndGlyphs">0.018825</text>
<text class="v" x="1645" y="523" textLength="52" lengthAdjust="spacingAndGlyphs">-0.0161</text>
<text class="v" x="1636" y="594" textLength="61" lengthAdjust="spacingAndGlyphs">-0.01615</text>
<text class="v" x="1645" y="663" textLength="52" lengthAdjust="spacingAndGlyphs">-0.0162</text>
<text class="v" x="1636" y="733" textLength="61" lengthAdjust="spacingAndGlyphs">-0.01625</text>
<text class="v" x="1645" y="803" textLength="52" lengthAdjust="spacingAndGlyphs">-0.0163</text>
<text class="v" x="1816" y="523" text-anchor="end">0</text>
<text class="v" x="1778" y="570" textLength="38" lengthAdjust="spacingAndGlyphs">-1e-6</text>
<text class="v" x="1778" y="617" textLength="38" lengthAdjust="spacingAndGlyphs">-2e-6</text>
<text class="v" x="1778" y="664" textLength="38" lengthAdjust="spacingAndGlyphs">-3e-6</text>
<text class="v" x="1778" y="710" textLength="38" lengthAdjust="spacingAndGlyphs">-4e-6</text>
<text class="v" x="1778" y="757" textLength="38" lengthAdjust="spacingAndGlyphs">-5e-6</text>
<text class="v" x="1778" y="803" textLength="38" lengthAdjust="spacingAndGlyphs">-6e-6</text>
</g>
<text class="vb" x="1334" y="838" textLength="34" lengthAdjust="spacingAndGlyphs" style="font-size:17px">SALT</text>
<text class="vb" x="1451" y="838" textLength="38" lengthAdjust="spacingAndGlyphs" style="font-size:17px">TEMP</text>
<text class="vb" x="1588" y="838" text-anchor="middle" style="font-size:17px">U</text>
<text class="vb" x="1706.500" y="838" text-anchor="middle" style="font-size:17px">V</text>
<text class="vb" x="1824" y="838" text-anchor="middle" style="font-size:17px">W</text>
<rect x="1756.500" y="807" width="20" height="34" fill="#000"/><text x="1766.500" y="833" text-anchor="middle" class="lab" style="fill:#fff;font-size:26px">F</text>

<!-- ===== status ===== -->
<rect x="610.500" y="860.500" width="19" height="19" rx="2" fill="url(#btn)" stroke="#c5c5c5"/>
<path d="M617 867L623 873M623 867L617 873" stroke="#8a8a8a" stroke-width="2.400"/>
<rect x="632.500" y="858.500" width="589" height="23" fill="#efefee" stroke="#b3b3b3"/>
<rect x="1229.500" y="859.500" width="610" height="20.500" rx="2" fill="#fff" stroke="#b3b3b3"/>
<rect x="1230" y="860" width="15" height="20" fill="#c8e6c0"/>
<text x="1440" y="874.500" textLength="190.500" lengthAdjust="spacingAndGlyphs">toshit: 13.8 GiB/503.6 GiB 2.7%</text>

<!-- ===== context menu ===== -->
<rect x="48" y="67" width="384" height="24" fill="#000" opacity=".5" filter="url(#b5)"/>
<rect x="429" y="67" width="252" height="90" fill="#000" opacity=".5" filter="url(#b5)"/>
<rect x="44" y="62" width="381" height="22" fill="#3289c6"/>
<text x="71" y="78.500" textLength="119" lengthAdjust="spacingAndGlyphs" style="fill:#d7e9f5">pyParaOcean Filters</text>
<path d="M416 70V77L420 73.500Z" fill="#d7e9f5"/>
<rect x="425" y="62" width="252" height="91" fill="#fff"/>
<text x="453" y="78.500" textLength="187" lengthAdjust="spacingAndGlyphs">pyParaOcean:DepthProfileFilter</text>
<text x="453" y="101.500" textLength="192" lengthAdjust="spacingAndGlyphs">pyParaOcean:EddyIdentification</text>
<text x="453" y="125" textLength="161.500" lengthAdjust="spacingAndGlyphs">pyParaOcean:SeedingFilter</text>
<text x="453" y="147.500" textLength="151" lengthAdjust="spacingAndGlyphs">pyParaOcean:TrackGraph</text>
<rect x="648" y="114" width="22" height="34" fill="#000"/><text x="659" y="140" text-anchor="middle" class="lab" style="fill:#fff;font-size:26px">A</text>
<rect x="467" y="232" width="21" height="34" fill="#000"/><text x="477.500" y="258" text-anchor="middle" class="lab" style="fill:#fff;font-size:26px">B</text>
<rect x="441" y="788" width="22" height="34" fill="#000"/><text x="452" y="814" text-anchor="middle" class="lab" style="fill:#fff;font-size:26px">C</text>
</g>
</svg>
</body></html>
